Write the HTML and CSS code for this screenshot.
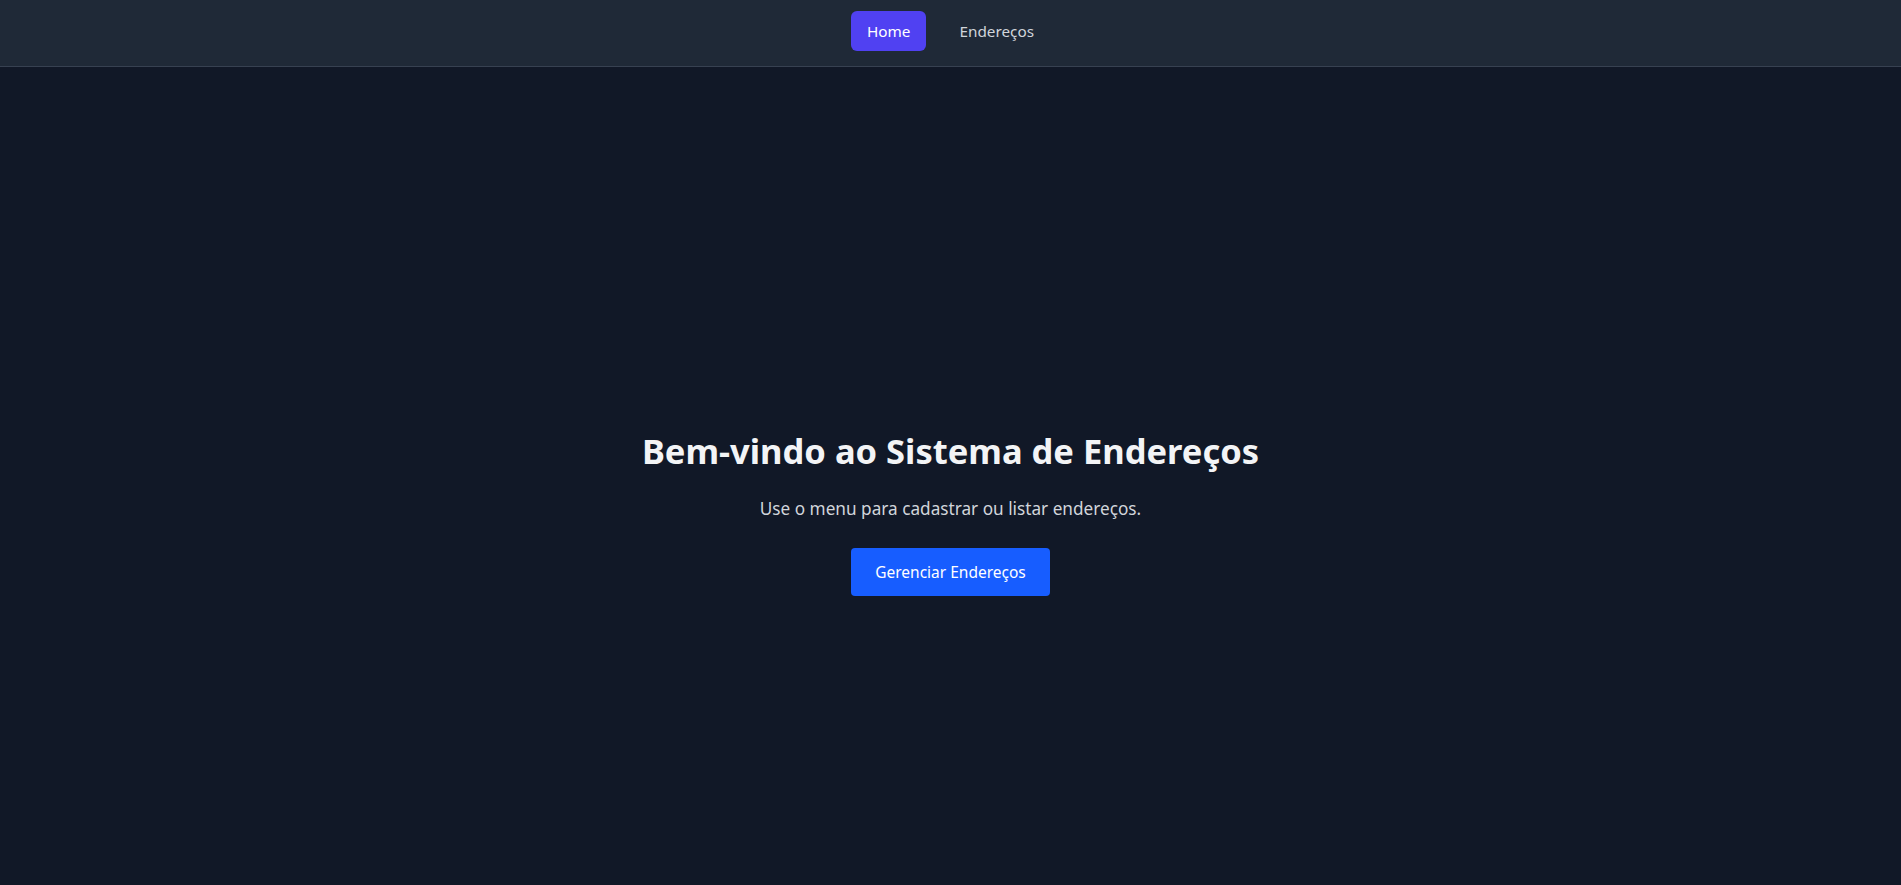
FILE: index.html
```html
<!DOCTYPE html>
<html lang="pt-BR">
<head>
<meta charset="utf-8">
<title>Sistema de Endereços</title>
<link rel="stylesheet" href="styles.css">
</head>
<body>
<nav class="navbar">
  <a class="nav-link active" href="#">Home</a>
  <a class="nav-link" href="#">Endereços</a>
</nav>
<main class="hero">
  <h1 class="hero-title">Bem-vindo ao Sistema de Endereços</h1>
  <p class="hero-text">Use o menu para cadastrar ou listar endereços.</p>
  <a class="hero-button" href="#">Gerenciar Endereços</a>
</main>
</body>
</html>
```
FILE: styles.css
```css
* { box-sizing: border-box; }
html, body {
  margin: 0;
  padding: 0;
  height: 100%;
  overflow: hidden;
}
body {
  background: #111827;
  color: #f3f4f6;
  font-family: "Noto Sans", "Open Sans", sans-serif;
}
.navbar {
  height: 67px;
  background: #1f2937;
  border-bottom: 1px solid #374151;
  display: flex;
  justify-content: center;
  align-items: flex-start;
  gap: 17px;
  padding-top: 11px;
}
.nav-link {
  display: flex;
  align-items: center;
  height: 40px;
  padding: 0 16px;
  border-radius: 6px;
  color: #d1d5db;
  text-decoration: none;
  font-size: 15.3px;
}
.nav-link.active {
  background: #5041f2;
  color: #ffffff;
}
.hero {
  height: calc(100% - 67px);
  display: flex;
  flex-direction: column;
  align-items: center;
  justify-content: center;
  padding-top: 75px;
  text-align: center;
}
.hero-title {
  margin: 0;
  font-size: 34.5px;
  line-height: 40px;
  font-weight: 700;
  color: #f3f4f6;
}
.hero-text {
  margin: 24px 0 0;
  font-size: 17.2px;
  line-height: 28px;
  color: #d1d5db;
}
.hero-button {
  margin-top: 25px;
  display: flex;
  align-items: center;
  height: 48px;
  padding: 0 24px;
  background: #175dff;
  color: #ffffff;
  border-radius: 4px;
  text-decoration: none;
  font-size: 15.5px;
}
```
